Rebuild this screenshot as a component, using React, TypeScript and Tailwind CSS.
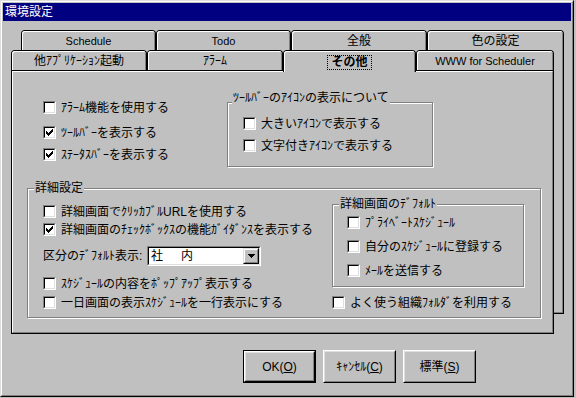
import React from "react";

function Check({ checked }: { checked?: boolean }) {
  return (
    <span className="block w-[13px] h-[13px] shrink-0 border border-t-[#808080] border-l-[#808080] border-r-white border-b-white">
      <span className="block w-[11px] h-[11px] border border-t-black border-l-black border-r-[#dfdfdf] border-b-[#dfdfdf] bg-white">
        {checked && (
          <svg width="9" height="9" viewBox="0 0 9 9" className="block" shapeRendering="crispEdges">
            <path
              d="M1 3h1v3H1zM2 4h1v3H2zM3 5h1v3H3zM4 4h1v3H4zM5 3h1v3H5zM6 2h1v3H6zM7 1h1v3H7z"
              fill="black"
            />
          </svg>
        )}
      </span>
    </span>
  );
}

function CbRow({
  checked,
  label,
  className = "",
}: {
  checked?: boolean;
  label: string;
  className?: string;
}) {
  return (
    <div className={"flex items-center gap-[5px] h-[13px] " + className}>
      <Check checked={checked} />
      <span className="leading-[14px] whitespace-nowrap">{label}</span>
    </div>
  );
}

function Tab({
  label,
  selected,
  w,
}: {
  label: React.ReactNode;
  selected?: boolean;
  w: string;
}) {
  return (
    <div
      className={`${w} ${
        selected ? "relative z-10 h-[22px] -mb-[2px]" : "h-[20px]"
      } shrink-0 border-t border-l border-r border-black rounded-t-[4px] bg-[#c0c0c0]`}
    >
      <div className="h-full border-t border-l border-r border-t-white border-l-white border-r-[#808080] rounded-t-[3px] flex items-center justify-center pb-[1px] leading-[14px] whitespace-nowrap">
        {label}
      </div>
    </div>
  );
}

function Btn({ children, def }: { children: React.ReactNode; def?: boolean }) {
  const inner = (
    <div className="h-full border border-t-white border-l-white border-r-black border-b-black">
      <div className="h-full border border-t-[#dfdfdf] border-l-[#dfdfdf] border-r-[#808080] border-b-[#808080] flex items-center justify-center leading-[14px] whitespace-nowrap">
        {children}
      </div>
    </div>
  );
  return def ? (
    <div className="w-[73px] h-[33px] border border-black">{inner}</div>
  ) : (
    <div className="w-[73px] h-[33px]">{inner}</div>
  );
}

export default function App() {
  return (
    <div className="w-[576px] h-[398px] bg-[#c0c0c0] text-[12px] text-black font-['Liberation_Sans','Noto_Sans_CJK_JP',sans-serif] overflow-hidden">
      <div className="w-[574px] h-[397px] border border-t-[#dfdfdf] border-l-[#dfdfdf] border-r-black border-b-black">
        <div className="h-full border border-t-white border-l-white border-r-[#808080] border-b-[#808080] p-[1px] flex flex-col">
          {/* title bar */}
          <div className="h-[18px] bg-[#000080] text-white flex items-center pl-[2px] leading-[14px]">
            環境設定
          </div>

          {/* stacked tab control */}
          <div className="grid ml-[8px] mt-[9px] w-[553px] h-[304px]">
            {/* back layer */}
            <div className="col-start-1 row-start-1 ml-[10px] w-[543px] flex flex-col">
              <div className="h-[20px] flex">
                <Tab w="w-[135px]" label={<span className="text-[11px]">Schedule</span>} />
                <Tab w="w-[135px]" label={<span className="text-[11px]">Todo</span>} />
                <Tab w="w-[136px]" label="全般" />
                <Tab w="w-[137px]" label="色の設定" />
              </div>
              <div className="h-[264px] border-x border-b border-black bg-[#c0c0c0]">
                <div className="h-full border-l border-r border-b border-l-white border-r-[#808080] border-b-[#808080]" />
              </div>
            </div>

            {/* front layer */}
            <div className="col-start-1 row-start-1 mt-[20px] w-[543px] flex flex-col">
              <div className="h-[20px] flex items-start">
                <Tab w="w-[136px]" label="他ｱﾌﾟﾘｹｰｼｮﾝ起動" />
                <Tab w="w-[136px]" label="ｱﾗｰﾑ" />
                <Tab
                  w="w-[133px]"
                  selected
                  label={
                    <span className="font-bold border border-dotted border-black px-[3px] mt-[1px] leading-[13px]">
                      その他
                    </span>
                  }
                />
                <Tab w="w-[138px]" label={<span className="text-[11px]">WWW for Scheduler</span>} />
              </div>
              <div className="h-[264px] border border-black bg-[#c0c0c0]">
                <div className="h-full border border-t-white border-l-white border-r-[#808080] border-b-[#808080]">
                  {/* top section */}
                  <div className="h-[116px] flex">
                    <div className="ml-[30px] w-[184px] pt-[29px] flex flex-col">
                      <CbRow label="ｱﾗｰﾑ機能を使用する" />
                      <CbRow className="mt-[12px]" checked label="ﾂｰﾙﾊﾞｰを表示する" />
                      <CbRow className="mt-[9px]" checked label="ｽﾃｰﾀｽﾊﾞｰを表示する" />
                    </div>
                    <div className="relative mt-[30px] w-[206px] h-[65px] border border-[#808080] shadow-[inset_1px_1px_0_#fff,1px_1px_0_#fff]">
                      <span className="absolute -top-[12px] left-[4px] bg-[#c0c0c0] px-[1px] leading-[14px] whitespace-nowrap">
                        ﾂｰﾙﾊﾞｰのｱｲｺﾝの表示について
                      </span>
                      <div className="pl-[15px] pt-[14px] flex flex-col">
                        <CbRow label="大きいｱｲｺﾝで表示する" />
                        <CbRow className="mt-[9px]" label="文字付きｱｲｺﾝで表示する" />
                      </div>
                    </div>
                  </div>

                  {/* detail settings */}
                  <div className="relative ml-[14px] w-[514px] h-[130px] border border-[#808080] shadow-[inset_1px_1px_0_#fff,1px_1px_0_#fff]">
                    <span className="absolute -top-[8px] left-[6px] bg-[#c0c0c0] px-[1px] leading-[14px] whitespace-nowrap">
                      詳細設定
                    </span>
                    <div className="flex pt-[15px]">
                      <div className="w-[304px] pl-[15px] pt-[1px] flex flex-col">
                        <CbRow label="詳細画面でｸﾘｯｶﾌﾞﾙURLを使用する" />
                        <CbRow
                          className="mt-[5px]"
                          checked
                          label="詳細画面のﾁｪｯｸﾎﾞｯｸｽの機能ｶﾞｲﾀﾞﾝｽを表示する"
                        />
                        <div className="mt-[10px] h-[20px] flex items-center">
                          <span className="w-[104px] leading-[14px] whitespace-nowrap">
                            区分のﾃﾞﾌｫﾙﾄ表示:
                          </span>
                          <div className="w-[114px] h-[20px] border border-t-[#808080] border-l-[#808080] border-r-white border-b-white">
                            <div className="h-full border border-t-black border-l-black border-r-[#dfdfdf] border-b-[#dfdfdf] bg-white flex items-center">
                              <span className="flex-1 pl-[2px] leading-[14px] tracking-[3px] whitespace-nowrap">
                                社　内
                              </span>
                              <div className="w-[16px] h-[16px] bg-[#c0c0c0] border border-t-[#dfdfdf] border-l-[#dfdfdf] border-r-black border-b-black">
                                <div className="h-full border border-t-white border-l-white border-r-[#808080] border-b-[#808080] flex items-center justify-center">
                                  <svg width="7" height="4" viewBox="0 0 7 4" shapeRendering="crispEdges" className="block">
                                    <path d="M0 0h7v1H0zM1 1h5v1H1zM2 2h3v1H2zM3 3h1v1H3z" fill="black" />
                                  </svg>
                                </div>
                              </div>
                            </div>
                          </div>
                        </div>
                        <CbRow className="mt-[11px]" label="ｽｹｼﾞｭｰﾙの内容をﾎﾟｯﾌﾟｱｯﾌﾟ表示する" />
                        <CbRow className="mt-[6px]" label="一日画面の表示ｽｹｼﾞｭｰﾙを一行表示にする" />
                      </div>
                      <div className="flex flex-col">
                        <div className="relative w-[192px] h-[83px] border border-[#808080] shadow-[inset_1px_1px_0_#fff,1px_1px_0_#fff]">
                          <span className="absolute -top-[8px] left-[6px] bg-[#c0c0c0] px-[1px] leading-[14px] whitespace-nowrap">
                            詳細画面のﾃﾞﾌｫﾙﾄ
                          </span>
                          <div className="pl-[14px] pt-[11px] flex flex-col">
                            <CbRow label="ﾌﾟﾗｲﾍﾞｰﾄｽｹｼﾞｭｰﾙ" />
                            <CbRow className="mt-[11px]" label="自分のｽｹｼﾞｭｰﾙに登録する" />
                            <CbRow className="mt-[11px]" label="ﾒｰﾙを送信する" />
                          </div>
                        </div>
                        <CbRow className="mt-[9px]" label="よく使う組織ﾌｫﾙﾀﾞを利用する" />
                      </div>
                    </div>
                  </div>
                </div>
              </div>
            </div>
          </div>

          {/* buttons */}
          <div className="mt-[16px] ml-[240px] flex gap-[7px]">
            <Btn def>
              OK(<span className="underline">O</span>)
            </Btn>
            <Btn>
              ｷｬﾝｾﾙ(<span className="underline">C</span>)
            </Btn>
            <Btn>
              標準(<span className="underline">S</span>)
            </Btn>
          </div>
        </div>
      </div>
    </div>
  );
}
